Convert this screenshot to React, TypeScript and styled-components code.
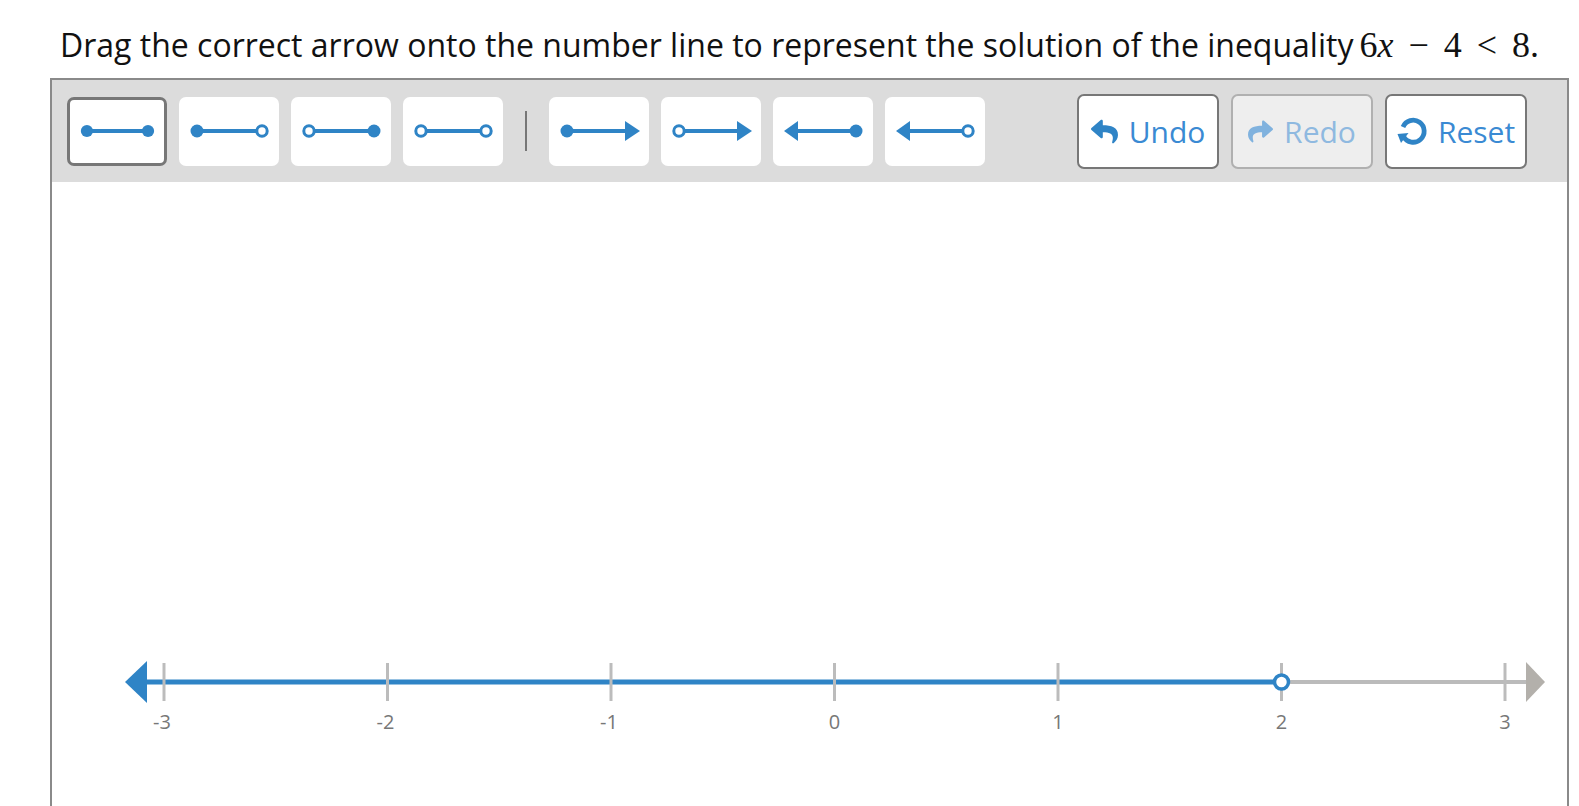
import React from "react"
import styled, { createGlobalStyle } from "styled-components"
import { FaReply, FaShare } from "react-icons/fa"

const BLUE = "#2f84c6"

type End = "closed" | "open" | "arrowL" | "arrowR"

const tools: [End, End][] = [
  ["closed", "closed"],
  ["closed", "open"],
  ["open", "closed"],
  ["open", "open"],
]

const rays: [End, End][] = [
  ["closed", "arrowR"],
  ["open", "arrowR"],
  ["arrowL", "closed"],
  ["arrowL", "open"],
]

const ticks = [-3, -2, -1, 0, 1, 2, 3]

const GlobalStyle = createGlobalStyle`
  html, body {
    margin: 0;
    padding: 0;
    overflow: hidden;
    background: #fff;
  }
  body {
    font-family: "Open Sans", "Noto Sans", sans-serif;
    color: #111;
  }
`

const SegmentIcon = ({ left, right }: { left: End; right: End }) => {
  const x1 = left === "arrowL" ? 24 : 18
  const x2 = right === "arrowR" ? 76 : 83
  const end = (kind: End, x: number) => {
    if (kind === "closed") return <circle cx={x} cy={15} r={6.5} fill={BLUE} />
    if (kind === "open")
      return <circle cx={x} cy={15} r={5.2} fill="#fff" stroke={BLUE} strokeWidth={3} />
    if (kind === "arrowR")
      return <polygon points={`${x + 15},15 ${x},5 ${x},25`} fill={BLUE} />
    return <polygon points="11,15 25,5 25,25" fill={BLUE} />
  }
  return (
    <svg width="100" height="30" viewBox="0 0 100 30">
      <line x1={x1} y1={15} x2={x2} y2={15} stroke={BLUE} strokeWidth={4} />
      {end(left, x1)}
      {end(right, x2)}
    </svg>
  )
}

const ResetIcon = () => (
  <svg width="30" height="30" viewBox="0 0 30 30">
    <path
      d="M6.5 20.5 A11 11 0 1 0 6 11"
      fill="none"
      stroke="currentColor"
      strokeWidth={4.8}
    />
    <polygon points="0.5,18 11.5,17 4,27" fill="currentColor" />
  </svg>
)

const NumberLine = () => {
  const x0 = 112
  const step = 223.5
  const y = 500
  const openAt = x0 + step * 5
  return (
    <svg width="1515" height="640" viewBox="0 0 1515 640">
      <line x1={95} y1={y} x2={openAt} y2={y} stroke={BLUE} strokeWidth={5} />
      <line x1={openAt} y1={y} x2={1476} y2={y} stroke="#bbbbbb" strokeWidth={4} />
      {ticks.map((t, i) => (
        <g key={t}>
          <line
            x1={x0 + i * step}
            y1={481}
            x2={x0 + i * step}
            y2={519}
            stroke="#bcbcbc"
            strokeWidth={3}
          />
          <text
            x={x0 + i * step - (t < 0 ? 2 : 0)}
            y={547}
            textAnchor="middle"
            fontFamily="Open Sans, sans-serif"
            fontSize="20"
            fill="#777"
          >
            {t}
          </text>
        </g>
      ))}
      <polygon points={`73,${y} 95,${y - 21} 95,${y + 21}`} fill={BLUE} />
      <polygon points={`1493,${y} 1474,${y - 20} 1474,${y + 20}`} fill="#b3b0ab" />
      <circle cx={openAt} cy={y} r={7} fill="#fff" stroke={BLUE} strokeWidth={3.5} />
    </svg>
  )
}

export default function App() {
  return (
    <Page>
      <GlobalStyle />
      <Prompt>
        Drag the correct arrow onto the number line to represent the solution of the inequality
        <Math>
          6<Var>x</Var>
          <Op>−</Op>4<Op>&lt;</Op>8.
        </Math>
      </Prompt>
      <Frame>
        <Toolbar>
          <ToolGroup>
            {tools.map(([l, r], i) => (
              <ToolButton key={i} $selected={i === 0}>
                <SegmentIcon left={l} right={r} />
              </ToolButton>
            ))}
            <Divider />
            {rays.map(([l, r], i) => (
              <ToolButton key={i}>
                <SegmentIcon left={l} right={r} />
              </ToolButton>
            ))}
          </ToolGroup>
          <ToolGroup>
            <ActionButton>
              <FaReply size={27} />
              Undo
            </ActionButton>
            <ActionButton $disabled>
              <FaShare size={25} />
              Redo
            </ActionButton>
            <ActionButton>
              <ResetIcon />
              Reset
            </ActionButton>
          </ToolGroup>
        </Toolbar>
        <Canvas>
          <NumberLine />
        </Canvas>
      </Frame>
    </Page>
  )
}

const Page = styled.div`
  padding: 24px 10px 0 50px;
`

const Prompt = styled.p`
  margin: 0 0 12px;
  padding-left: 10px;
  font-size: 32px;
  line-height: 42px;
  white-space: nowrap;
`

const Math = styled.span`
  font-family: "Liberation Serif", "Times New Roman", serif;
  font-size: 36px;
  margin-left: 6px;
`

const Var = styled.i`
  font-style: italic;
`

const Op = styled.span`
  margin: 0 15px;
`

const Frame = styled.div`
  border: 2px solid #8a8a8a;
  border-bottom: none;
`

const Toolbar = styled.div`
  display: flex;
  align-items: center;
  justify-content: space-between;
  height: 102px;
  padding: 0 40px 0 15px;
  background: #dcdcdc;
`

const ToolGroup = styled.div`
  display: flex;
  align-items: center;
  gap: 12px;
`

const ToolButton = styled.div<{ $selected?: boolean }>`
  display: flex;
  align-items: center;
  justify-content: center;
  box-sizing: border-box;
  width: 100px;
  height: 69px;
  border-radius: 7px;
  background: #fff;
  border: ${({ $selected }) => ($selected ? "3px solid #777" : "none")};
`

const Divider = styled.div`
  width: 2px;
  height: 40px;
  margin: 0 10px;
  background: #777;
`

const ActionButton = styled.div<{ $disabled?: boolean }>`
  display: flex;
  align-items: center;
  justify-content: center;
  gap: 11px;
  box-sizing: border-box;
  width: 142px;
  height: 75px;
  border-radius: 7px;
  font-size: 30px;
  color: ${({ $disabled }) => ($disabled ? "#8fb9e0" : "#3a8ad3")};
  background: ${({ $disabled }) => ($disabled ? "#eeeeee" : "#fff")};
  border: 2px solid ${({ $disabled }) => ($disabled ? "#b0b0b0" : "#777")};

  svg {
    color: ${({ $disabled }) => ($disabled ? "#80b2de" : "#2f84c6")};
    flex-shrink: 0;
  }
`

const Canvas = styled.div`
  background: #fff;
`
